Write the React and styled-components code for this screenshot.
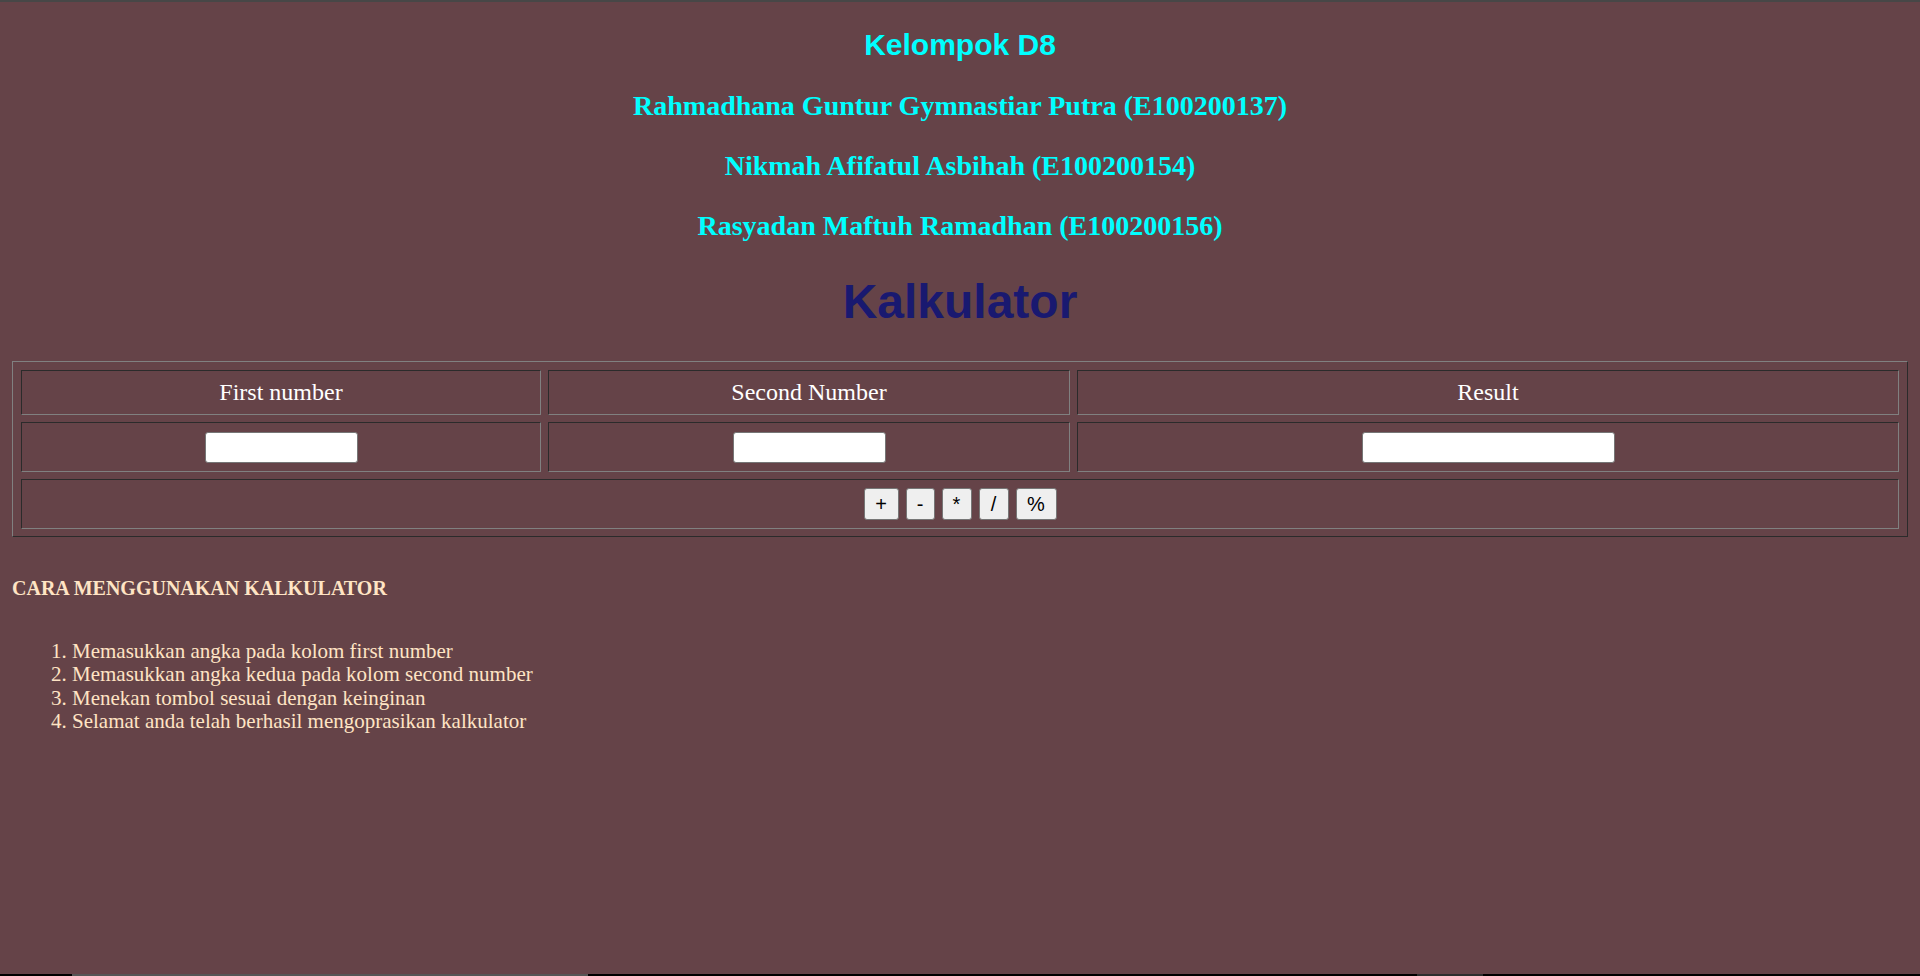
import React from "react";
import styled, { createGlobalStyle } from "styled-components";

const Global = createGlobalStyle`
  html, body { margin: 0; padding: 0; background: #654348; }
  body { font-family: "Liberation Serif", "Times New Roman", serif; }
  #root { min-height: 100vh; }
`;

const Page = styled.div`
  min-height: 100vh;
  display: flex;
  flex-direction: column;
  background: #654348;
`;

const TopLine = styled.div`
  height: 2px;
  background: #474747;
`;

const Main = styled.main`
  flex: 1;
  padding: 0 12px;
  display: flex;
  flex-direction: column;
`;

const Header = styled.header`
  display: flex;
  flex-direction: column;
  align-items: center;
`;

const Group = styled.h2`
  margin: 26px 0 0;
  font-family: "Liberation Sans", Arial, sans-serif;
  font-weight: 700;
  font-size: 30px;
  line-height: 34px;
  color: #00ffff;
`;

const Member = styled.h3`
  margin: 28px 0 0;
  font-family: "Liberation Serif", "Times New Roman", serif;
  font-weight: 700;
  font-size: 28px;
  line-height: 32px;
  color: #00ffff;
`;

const AppTitle = styled.h1`
  margin: 32px 0 0;
  font-family: "Liberation Sans", Arial, sans-serif;
  font-weight: 700;
  font-size: 48px;
  line-height: 56px;
  color: #191970;
`;

const CalcTable = styled.table`
  margin-top: 31px;
  width: 100%;
  border-collapse: separate;
  border-spacing: 7px;
  padding: 1px 1px 0;
  border-style: solid;
  border-width: 1px;
  border-color: #808080 #2b2b2b #2b2b2b #808080;
`;

const Cell = styled.td`
  height: ${(p) => p.$h}px;
  padding: 0;
  text-align: center;
  vertical-align: middle;
  border-style: solid;
  border-width: 1px;
  border-color: #2b2b2b #808080 #808080 #2b2b2b;
  font-family: "Liberation Serif", "Times New Roman", serif;
  font-size: 24px;
  color: #ffffff;
  width: ${(p) => (p.$w ? `${p.$w}px` : "auto")};
`;

const NumberInput = styled.input`
  box-sizing: border-box;
  width: ${(p) => p.$w}px;
  height: 31px;
  margin: 0;
  padding: 2px 4px;
  background: #ffffff;
  border: 1px solid #767676;
  border-radius: 3px;
  font-size: 20px;
  vertical-align: middle;
`;

const Ops = styled.div`
  display: flex;
  justify-content: center;
  gap: 7px;
`;

const OpButton = styled.button`
  box-sizing: border-box;
  height: 32px;
  min-width: ${(p) => p.$w}px;
  padding: 0 9px;
  background: #efefef;
  color: #000;
  border: 1px solid #767676;
  border-radius: 3px;
  font-family: "Liberation Sans", Arial, sans-serif;
  font-size: 20px;
  line-height: 1;
`;

const HowTo = styled.h4`
  margin: 39px 0 0;
  font-family: "Liberation Serif", "Times New Roman", serif;
  font-weight: 700;
  font-size: 20px;
  line-height: 24px;
  color: #ffe4c4;
`;

const Steps = styled.ol`
  margin: 40px 0 0;
  padding-left: 60px;
  font-family: "Liberation Serif", "Times New Roman", serif;
  font-size: 21px;
  line-height: 23.3px;
  color: #ffe4c4;
`;

const BottomBar = styled.div`
  height: 2px;
  background: #000;
  display: flex;
`;

const BarSegment = styled.div`
  margin-left: ${(p) => p.$left}px;
  width: ${(p) => p.$w}px;
  background: ${(p) => p.$c};
`;

const members = [
  "Rahmadhana Guntur Gymnastiar Putra (E100200137)",
  "Nikmah Afifatul Asbihah (E100200154)",
  "Rasyadan Maftuh Ramadhan (E100200156)",
];

const ops = [
  { s: "+", w: 35 },
  { s: "-", w: 29 },
  { s: "*", w: 30 },
  { s: "/", w: 30 },
  { s: "%", w: 41 },
];

const steps = [
  "Memasukkan angka pada kolom first number",
  "Memasukkan angka kedua pada kolom second number",
  "Menekan tombol sesuai dengan keinginan",
  "Selamat anda telah berhasil mengoprasikan kalkulator",
];

export default function App() {
  return (
    <Page>
      <Global />
      <TopLine />
      <Main>
        <Header>
          <Group>Kelompok D8</Group>
          {members.map((m) => (
            <Member key={m}>{m}</Member>
          ))}
          <AppTitle>Kalkulator</AppTitle>
        </Header>
        <CalcTable>
          <tbody>
            <tr>
              <Cell $h={43} $w={518}>First number</Cell>
              <Cell $h={43} $w={520}>Second Number</Cell>
              <Cell $h={43}>Result</Cell>
            </tr>
            <tr>
              <Cell $h={48}>
                <NumberInput type="text" $w={153} />
              </Cell>
              <Cell $h={48}>
                <NumberInput type="text" $w={153} />
              </Cell>
              <Cell $h={48}>
                <NumberInput type="text" $w={253} />
              </Cell>
            </tr>
            <tr>
              <Cell $h={48} colSpan={3}>
                <Ops>
                  {ops.map((o) => (
                    <OpButton key={o.s} $w={o.w}>
                      {o.s}
                    </OpButton>
                  ))}
                </Ops>
              </Cell>
            </tr>
          </tbody>
        </CalcTable>
        <HowTo>CARA MENGGUNAKAN KALKULATOR</HowTo>
        <Steps>
          {steps.map((s) => (
            <li key={s}>{s}</li>
          ))}
        </Steps>
      </Main>
      <BottomBar>
        <BarSegment $left={72} $w={516} $c="#555555" />
        <BarSegment $left={829} $w={66} $c="#2e2e2e" />
      </BottomBar>
    </Page>
  );
}
